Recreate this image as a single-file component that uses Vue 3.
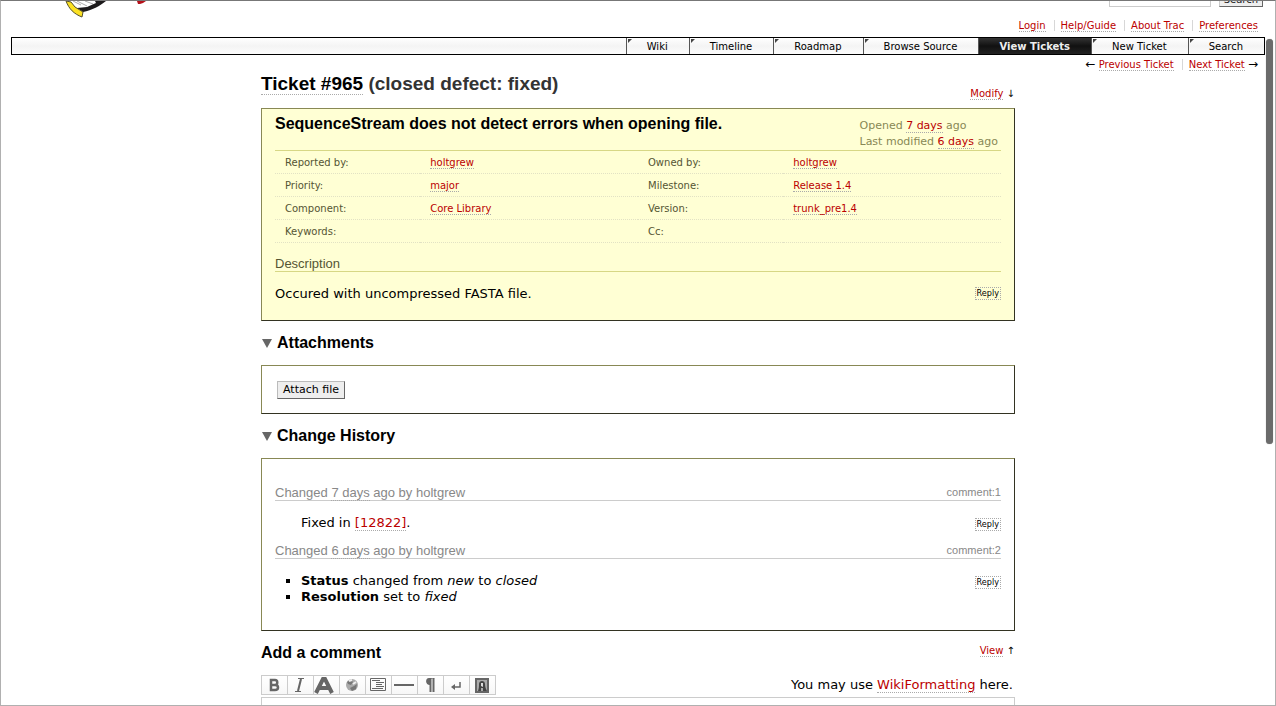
<script setup>
import { ref } from 'vue'

const meta = ['Login', 'Help/Guide', 'About Trac', 'Preferences']
const nav = ['Wiki', 'Timeline', 'Roadmap', 'Browse Source', 'View Tickets', 'New Ticket', 'Search']
const active = 'View Tickets'
const properties = [
  ['Reported by:', 'holtgrew', 'Owned by:', 'holtgrew'],
  ['Priority:', 'major', 'Milestone:', 'Release 1.4'],
  ['Component:', 'Core Library', 'Version:', 'trunk_pre1.4'],
  ['Keywords:', '', 'Cc:', '']
]
const query = ref('')
const comment = ref('')
</script>

<template>
  <div class="window">
    <header class="banner">
      <a class="logo" href="#" aria-label="Project home">
        <svg width="90" height="17" viewBox="0 0 90 17">
          <path d="M2 0H41C35 5 28 9 20 12L12 8Z" fill="#fff" />
          <path d="M8 0L16 4M12 0L22 5M20 0L28 3" stroke="#888" stroke-width="0.700" fill="none" />
          <path d="M41 0C35 5 27 9 18 11L12 7L22 6L31 2L30 0Z" fill="#1c1a1b" />
          <path d="M1 0L6 1L10 6L18 11L17 16C9 13 4 8 1 0Z" fill="#fbe122" stroke="#55502a" />
          <path d="M72 0H81L78 2L75 3L73 3Z" fill="#b5121b" />
        </svg>
      </a>
      <form class="search" @submit.prevent>
        <input v-model="query" type="text" aria-label="Search the project">
        <button type="submit">Search</button>
      </form>
    </header>

    <nav class="links" aria-label="Account">
      <ul><li v-for="m in meta" :key="m"><a href="#">{{ m }}</a></li></ul>
    </nav>

    <nav class="mainnav" aria-label="Main">
      <ul>
        <li v-for="n in nav" :key="n" :class="{ active: n === active }"><a href="#">{{ n }}</a></li>
      </ul>
    </nav>

    <nav class="links context" aria-label="Tickets">
      <ul>
        <li><span class="arrow">←</span> <a href="#">Previous Ticket</a></li>
        <li><a href="#">Next Ticket</a> <span class="arrow">→</span></li>
      </ul>
    </nav>

    <main class="content">
      <div class="heading">
        <h1><a href="#">Ticket #965</a> <span>(closed defect: fixed)</span></h1>
        <p class="jump"><a href="#">Modify</a> ↓</p>
      </div>

      <section class="box ticket">
        <div class="summary">
          <h2>SequenceStream does not detect errors when opening file.</h2>
          <div class="date">
            <p>Opened <a href="#">7 days</a> ago</p>
            <p>Last modified <a href="#">6 days</a> ago</p>
          </div>
        </div>
        <table class="properties">
          <tbody>
            <tr v-for="row in properties" :key="row[0]">
              <th scope="row">{{ row[0] }}</th>
              <td><a v-if="row[1]" href="#">{{ row[1] }}</a></td>
              <th scope="row">{{ row[2] }}</th>
              <td><a v-if="row[3]" href="#">{{ row[3] }}</a></td>
            </tr>
          </tbody>
        </table>
        <h3 class="rule">Description</h3>
        <div class="entry">
          <p>Occured with uncompressed FASTA file.</p>
          <button class="reply" type="button">Reply</button>
        </div>
      </section>

      <h2 class="fold">Attachments</h2>
      <section class="box attachments">
        <button type="button">Attach file</button>
      </section>

      <h2 class="fold">Change History</h2>
      <section class="box history">
        <h3 class="rule"><span>Changed <a href="#">7 days</a> ago by holtgrew</span><a class="anchor" href="#">comment:1</a></h3>
        <div class="entry change">
          <p>Fixed in <a href="#">[12822]</a>.</p>
          <button class="reply" type="button">Reply</button>
        </div>
        <h3 class="rule"><span>Changed <a href="#">6 days</a> ago by holtgrew</span><a class="anchor" href="#">comment:2</a></h3>
        <div class="entry change">
          <ul>
            <li><strong>Status</strong> changed from <em>new</em> to <em>closed</em></li>
            <li><strong>Resolution</strong> set to <em>fixed</em></li>
          </ul>
          <button class="reply" type="button">Reply</button>
        </div>
      </section>

      <div class="heading comment-heading">
        <h2>Add a comment</h2>
        <p class="jump"><a href="#">View</a> ↑</p>
      </div>
      <div class="editor-bar">
        <div class="toolbar" role="toolbar" aria-label="Formatting">
          <button type="button" aria-label="Bold">
            <svg viewBox="0 0 25 18"><path d="M9 4V14H13C17 14 17 9 13 9C16 9 16 4 13 4ZM9 9H13" stroke-width="2.500" /></svg>
          </button>
          <button type="button" aria-label="Italic">
            <svg viewBox="0 0 25 18"><path d="M10 2.500H16M7 15.500H13" stroke-width="1" /><path d="M13 3L10 15" /></svg>
          </button>
          <button type="button" aria-label="Heading">
            <svg viewBox="0 0 25 18"><path d="M2 17L9 3H11L18 17M5 12H15" stroke-width="4" /></svg>
          </button>
          <button type="button" aria-label="Link">
            <svg viewBox="0 0 25 18"><circle cx="12" cy="9" r="6" fill="#aaa" stroke="none" /><path d="M7 6L11 4L13 6L11 9L8 8ZM14 10L17 8L16 13L12 15L10 12Z" fill="#777" stroke="none" /><path d="M9 5L12 4M13 8L16 6" stroke="#eee" stroke-width="2" /></svg>
          </button>
          <button type="button" aria-label="Code block">
            <svg viewBox="0 0 25 18"><path d="M4.500 2.500H19.500V14.500H4.500ZM6 4.500H14M10 6.500H18M10 8.500H16M10 10.500H18M6 12.500H17" stroke-width="1" /></svg>
          </button>
          <button type="button" aria-label="Horizontal rule">
            <svg viewBox="0 0 25 18"><path d="M2 9H22" /></svg>
          </button>
          <button type="button" aria-label="Paragraph">
            <svg viewBox="0 0 25 18"><path d="M17 2H11C7 2 7 9 12 9V3Z" fill="#666" stroke="none" /><path d="M12.500 2V16M15.500 2V16" /></svg>
          </button>
          <button type="button" aria-label="Line break">
            <svg viewBox="0 0 25 18"><path d="M16 6V11H9" stroke-width="1.500" /><path d="M7 11L11 8V14Z" fill="#666" stroke="none" /></svg>
          </button>
          <button type="button" aria-label="Image">
            <svg viewBox="0 0 25 18"><path d="M6 3H18V16H6Z" fill="#aaa" /><path d="M8 15C9 12 9 10 9 8C9 4 15 4 15 8C15 11 16 13 17 15H13V12H11V15Z" fill="#444" stroke="none" /><path d="M11 7L13 7L13 11L11 10Z" fill="#ddd" stroke="none" /></svg>
          </button>
        </div>
        <p>You may use <a href="#">WikiFormatting</a> here.</p>
      </div>
      <textarea v-model="comment" aria-label="Comment" rows="10"></textarea>
    </main>
    <div class="scroll-thumb"></div>
  </div>
</template>

<style>
body { background: #fff; }
</style>

<style scoped>
* { box-sizing: border-box; }
h1, h2, h3, p, ul { margin: 0; padding: 0; }
.window {
  position: relative;
  height: 100vh;
  overflow: hidden;
  border: 1px solid #b0b0b0;
  border-top-color: #777;
  color: #000;
  font: 13px/16px Verdana, "DejaVu Sans", sans-serif;
}
a { color: #b00; text-decoration: none; border-bottom: 1px dotted #aaa; }
button, input, textarea { font-family: inherit; }

.banner { display: flex; justify-content: space-between; height: 17px; padding: 0 12px 0 64px; }
.logo { border: 0; }
.logo svg { display: block; }
.search { display: flex; align-items: flex-end; align-self: flex-start; gap: 8px; height: 20px; margin-top: -14px; }
.search input { width: 102px; height: 20px; border: 1px solid #ccc; }
.search button { height: 15px; padding: 0 4px; font-size: 10px; line-height: 13px; color: #222; background: #eee; border: 1px solid; border-color: #ccc #666 #666 #ccc; }

.links { font-size: 10px; padding-right: 17px; }
.links ul { display: flex; justify-content: flex-end; list-style: none; }
.links li { padding: 0 8px 0 7px; white-space: nowrap; }
.links li:last-child { padding-right: 0; }
.links li + li { background: linear-gradient(#d7d7d7, #d7d7d7) 0 2px / 1px 11px no-repeat; }
.context { margin-top: 2px; }
.arrow { font-size: 12px; line-height: 10px; }

.mainnav { margin: 3px 10px 0; border: 1px solid #000; background: linear-gradient(#fff, #f4f4f4 50%, #fcfcfc); }
.mainnav ul { display: flex; justify-content: flex-end; list-style: none; font-size: 10px; }
.mainnav li { border-left: 1px solid #555; position: relative; }
.mainnav li::before { content: ""; position: absolute; left: 1px; top: 1px; border-top: 4px solid #444; border-right: 4px solid transparent; }
.mainnav a { display: block; padding: 2px 21px 0 20px; line-height: 14px; color: #000; border: 0; }
.mainnav .active { background: linear-gradient(#333, #111 50%, #222); }
.mainnav .active a { color: #eee; font-weight: bold; }
.mainnav .active::before { display: none; }

.content { width: 754px; max-width: 100%; margin: 0 auto; }
.heading { display: flex; justify-content: space-between; align-items: flex-end; height: 35px; padding-bottom: 6px; }
h1, h2, h3 { font-family: "Liberation Sans", Arial, sans-serif; }
h1 { align-self: flex-start; font-size: 19px; line-height: 22px; }
h1 a { color: #000; }
h1 span { color: #333; }
h2 { font-size: 16px; line-height: 20px; }
.jump { font-size: 10px; }

.box { border: 1px solid; border-color: #885 #332 #332 #885; padding: 0 13px; }
.ticket { background: #ffffd4; padding-bottom: 18px; }
.summary { display: flex; justify-content: space-between; padding-top: 5px; border-bottom: 1px solid #d7d785; }
.date { padding: 4px 3px 0 0; font-size: 11px; color: #885; }
.properties { width: 100%; table-layout: fixed; border-collapse: separate; border-spacing: 0; font-size: 10px; }
.properties th, .properties td { height: 23px; padding: 2px 10px 0; text-align: left; border-bottom: 1px dotted #e2e2c4; }
.properties th { width: 20%; color: #553; font-weight: normal; }
.rule { display: flex; justify-content: space-between; padding-top: 2px; font-size: 13px; line-height: 14px; font-weight: normal; color: #888; border-bottom: 1px solid #ccc; }
.ticket .rule { margin-top: 12px; color: #553; border-color: #d7d785; }
.rule a { color: inherit; }
.rule .anchor { border: 0; font-size: 11px; line-height: 12px; }
.entry { display: flex; justify-content: space-between; align-items: flex-start; margin-top: 14px; }
.reply { padding: 0 1px; height: 13px; font-family: "DejaVu Sans Condensed", sans-serif; font-size: 9px; line-height: 11px; background: none; border: 1px dotted #aaa; color: #000; }
.ticket .reply { margin-top: 1px; }

.fold { display: flex; align-items: center; gap: 5px; margin: 12px 0; }
.fold::before { content: ""; margin-left: 1px; border-top: 9px solid #666; border-left: 5px solid transparent; border-right: 5px solid transparent; }
.attachments { padding: 15px; height: 49px; }
.attachments button { display: block; height: 18px; padding: 0 5px; font-size: 11px; line-height: 16px; background: #eee; border: 1px solid; border-color: #bbb #666 #666 #bbb; }

.history { padding-top: 25px; padding-bottom: 25px; }
.change { padding-left: 26px; margin-bottom: 11px; }
.history .change:last-child { margin-bottom: 0; }
.change .reply { margin-top: 3px; }
.change ul { list-style: square; }

.comment-heading { height: 44px; padding: 12px 0; align-items: flex-start; }
.editor-bar { display: flex; justify-content: space-between; align-items: center; height: 20px; }
.toolbar { display: flex; border: 1px solid #ccc; height: 20px; }
.toolbar button { width: 26px; height: 18px; padding: 0; border: 0; border-right: 1px solid #ccc; background: linear-gradient(#fff, #f7f7f7); }
.toolbar button:last-child { border-right: 0; width: 25px; }
.toolbar svg { display: block; width: 25px; height: 18px; fill: none; stroke: #666; stroke-width: 2; }
.editor-bar p { padding-right: 2px; }
textarea { display: block; width: 100%; margin-top: 2px; border: 1px solid #ccc; resize: none; }

.scroll-thumb { position: absolute; top: 38px; right: 2px; width: 7px; height: 405px; border-radius: 4px; background: #6b6b6b; box-shadow: 0 0 1px #999; }
</style>
